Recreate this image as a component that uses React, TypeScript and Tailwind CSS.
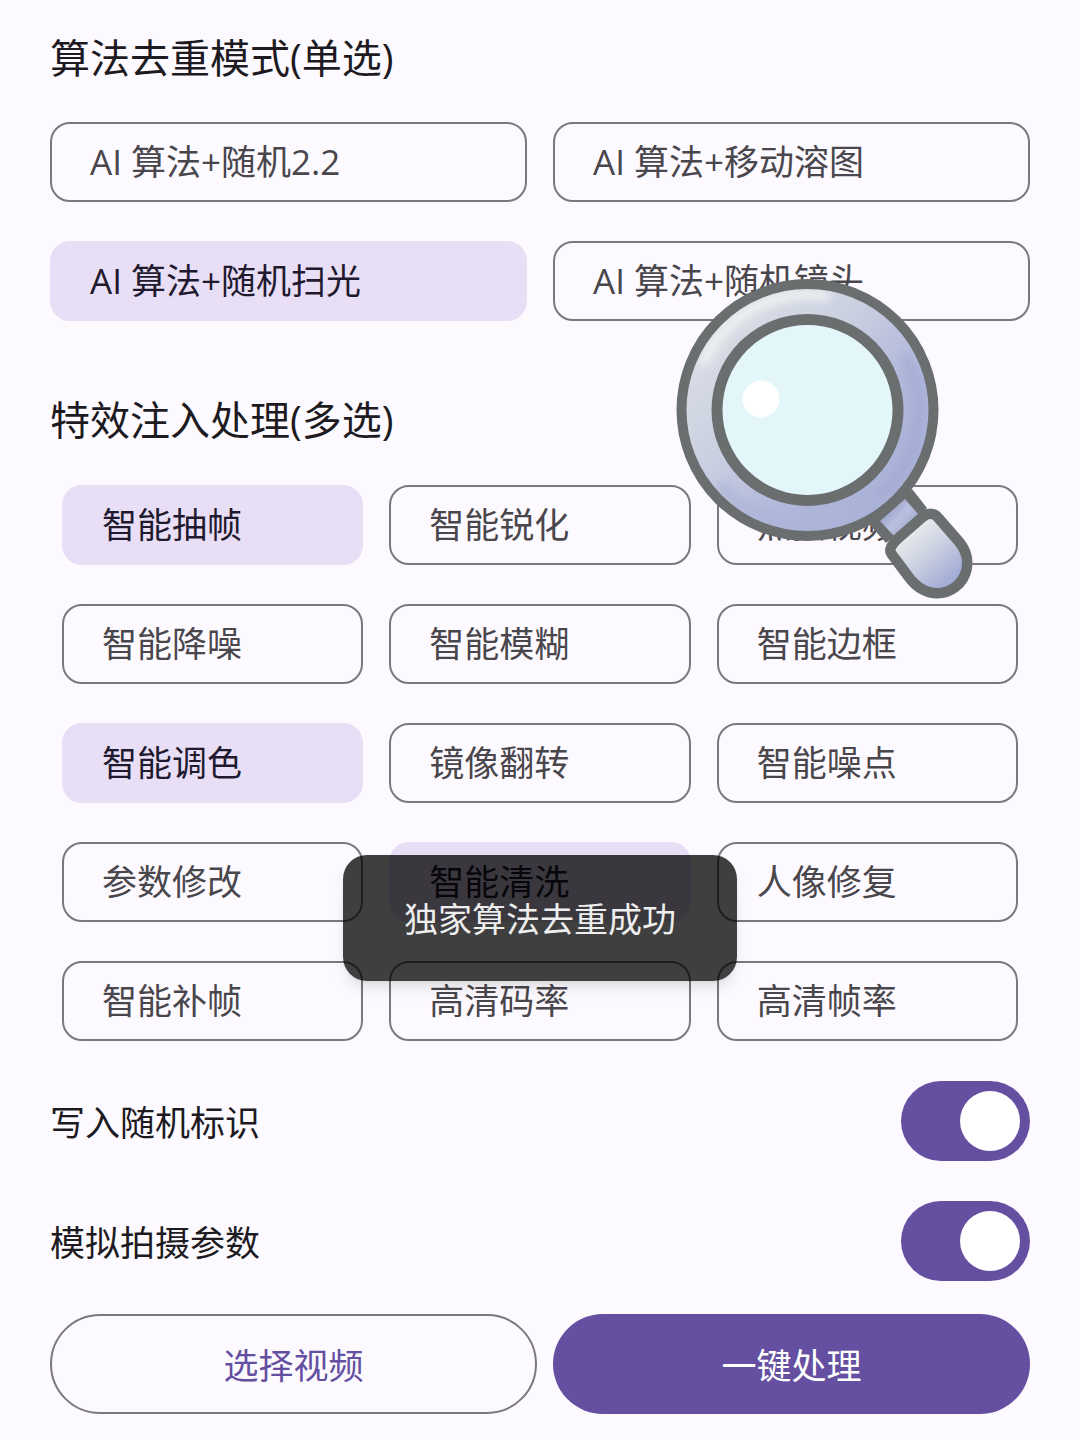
import { useState } from 'react';

const MODES = ['AI 算法+随机2.2', 'AI 算法+移动溶图', 'AI 算法+随机扫光', 'AI 算法+随机镜头'];

const EFFECTS = [
  '智能抽帧', '智能锐化', '点播视频',
  '智能降噪', '智能模糊', '智能边框',
  '智能调色', '镜像翻转', '智能噪点',
  '参数修改', '智能清洗', '人像修复',
  '智能补帧', '高清码率', '高清帧率',
];

type ChipProps = {
  type: 'radio' | 'checkbox';
  name: string;
  label: string;
  checked: boolean;
  onChange: () => void;
};

function Chip({ type, name, label, checked, onChange }: ChipProps) {
  return (
    <label
      className={`relative flex h-20 items-center rounded-[20px] border-2 pl-[38px] text-[35px] leading-[48px] whitespace-nowrap cursor-pointer ${
        checked ? 'border-[#e8def6] bg-[#e8def6] text-[#1f1a2e]' : 'border-[#7c797e] text-[#49464c]'
      }`}
    >
      <input type={type} name={name} checked={checked} onChange={onChange} className="sr-only" />
      {label}
    </label>
  );
}

function Switch({ label, checked, onChange }: { label: string; checked: boolean; onChange: () => void }) {
  return (
    <label className="flex h-20 items-center justify-between text-[35px] leading-[48px] text-[#1d1b1f] cursor-pointer">
      <span className="pt-1">{label}</span>
      <input
        type="checkbox"
        role="switch"
        checked={checked}
        onChange={onChange}
        className="h-20 w-[129px] shrink-0 appearance-none rounded-full bg-[#cac4d0] p-[10px] before:block before:size-[60px] before:rounded-full before:bg-white checked:bg-[#654fa1] checked:before:ml-auto"
      />
    </label>
  );
}

function Magnifier() {
  return (
    <svg
      viewBox="670 270 310 335"
      className="pointer-events-none absolute top-[270px] left-[62%] w-[310px]"
      aria-hidden="true"
    >
      <defs>
        <linearGradient id="ring" gradientUnits="userSpaceOnUse" x1="715" y1="330" x2="890" y2="500">
          <stop offset="0" stopColor="#d8dde5" />
          <stop offset="0.35" stopColor="#cbd0e1" />
          <stop offset="0.7" stopColor="#b0b7da" />
          <stop offset="1" stopColor="#a9b1d7" />
        </linearGradient>
        <linearGradient id="neck" gradientUnits="userSpaceOnUse" x1="886" y1="508" x2="910" y2="530">
          <stop offset="0" stopColor="#989fc9" />
          <stop offset="0.5" stopColor="#b9c0df" />
          <stop offset="1" stopColor="#a3aad0" />
        </linearGradient>
        <linearGradient id="grip" gradientUnits="userSpaceOnUse" x1="908" y1="533" x2="948" y2="580">
          <stop offset="0" stopColor="#e6ebed" />
          <stop offset="0.45" stopColor="#cdd2e2" />
          <stop offset="1" stopColor="#a5aed7" />
        </linearGradient>
        <filter id="soft" x="-30%" y="-30%" width="160%" height="160%">
          <feGaussianBlur stdDeviation="5" />
        </filter>
        <clipPath id="rim">
          <circle cx="807.5" cy="410" r="126" />
        </clipPath>
      </defs>

      {/* neck between lens and grip */}
      <path d="M870 525 L912 489 L927 508 L886 543 Z" fill="#6b6e6f" />
      <path d="M880 521 L905 499 L918 514 L894 536 Z" fill="url(#neck)" />

      {/* rim */}
      <circle cx="807.5" cy="410" r="126" fill="url(#ring)" />
      <g clipPath="url(#rim)">
        <g fill="none" strokeLinecap="round" filter="url(#soft)">
          <path d="M704 362 A114 114 0 0 1 826 296" stroke="#f1f5f3" strokeWidth="9" />
          <path d="M906 359 A111 111 0 0 1 882 493" stroke="#a2aad4" strokeWidth="8" />
          <path d="M722 487 A115 115 0 0 0 850 517" stroke="#acb4d8" strokeWidth="8" />
        </g>
      </g>
      <circle cx="807.5" cy="410" r="126" fill="none" stroke="#6b6e6f" strokeWidth="10" />

      {/* glass */}
      <circle cx="807.5" cy="410" r="90.5" fill="#e3f6f9" stroke="#6b6e6f" strokeWidth="11" />
      <circle cx="761" cy="399" r="18.5" fill="#ffffff" />

      {/* grip */}
      <path
        d="M895.5 550.5 Q896 547 903 541 L926 521 Q931 517 934 521 L954 544 C961 552 963 560 961.5 568 C959 580 948 588.5 936 588 C927 587.5 919 582 913 574 Z"
        fill="url(#grip)"
        stroke="#6b6e6f"
        strokeWidth="21"
        strokeLinejoin="round"
        paintOrder="stroke"
      />
    </svg>
  );
}

export default function App() {
  const [mode, setMode] = useState(2);
  const [effects, setEffects] = useState<number[]>([0, 6, 10]);
  const [writeId, setWriteId] = useState(true);
  const [simulate, setSimulate] = useState(true);

  const toggleEffect = (i: number) =>
    setEffects((prev) => (prev.includes(i) ? prev.filter((n) => n !== i) : [...prev, i]));

  return (
    <div className="relative min-h-screen overflow-hidden bg-[#fdfaff] px-[50px] pt-8 pb-[26px] font-['Open_Sans','Noto_Sans_CJK_SC',sans-serif]">
      <h2 className="text-[40px] leading-[52px] text-[#1d1b1f]">算法去重模式(单选)</h2>
      <div className="mt-[38px] grid grid-cols-2 gap-x-[26px] gap-y-[39px]">
        {MODES.map((label, i) => (
          <Chip key={label} type="radio" name="mode" label={label} checked={mode === i} onChange={() => setMode(i)} />
        ))}
      </div>

      <h2 className="mt-[73px] text-[40px] leading-[52px] text-[#1d1b1f]">特效注入处理(多选)</h2>
      <div className="mt-[39px] grid grid-cols-3 gap-x-[26px] gap-y-[39px] px-3">
        {EFFECTS.map((label, i) => (
          <Chip key={label} type="checkbox" name="effects" label={label} checked={effects.includes(i)} onChange={() => toggleEffect(i)} />
        ))}
      </div>

      <div className="mt-10 grid gap-10">
        <Switch label="写入随机标识" checked={writeId} onChange={() => setWriteId(!writeId)} />
        <Switch label="模拟拍摄参数" checked={simulate} onChange={() => setSimulate(!simulate)} />
      </div>

      <div className="mt-[33px] grid grid-cols-[487fr_477fr] gap-4 text-[35px] leading-[48px]">
        <button type="button" className="h-[100px] rounded-full border-2 border-[#7c797e] pt-1 text-[#654fa1]">选择视频</button>
        <button type="button" className="h-[100px] rounded-full bg-[#654fa1] pt-1 text-white">一键处理</button>
      </div>

      <Magnifier />

      <div
        role="status"
        className="absolute top-[855px] left-1/2 -translate-x-1/2 rounded-[24px] bg-black/75 px-[61px] pt-10 pb-[38px] text-[34px] leading-[48px] whitespace-nowrap text-[#eeeeee] shadow-lg"
      >
        独家算法去重成功
      </div>
    </div>
  );
}
